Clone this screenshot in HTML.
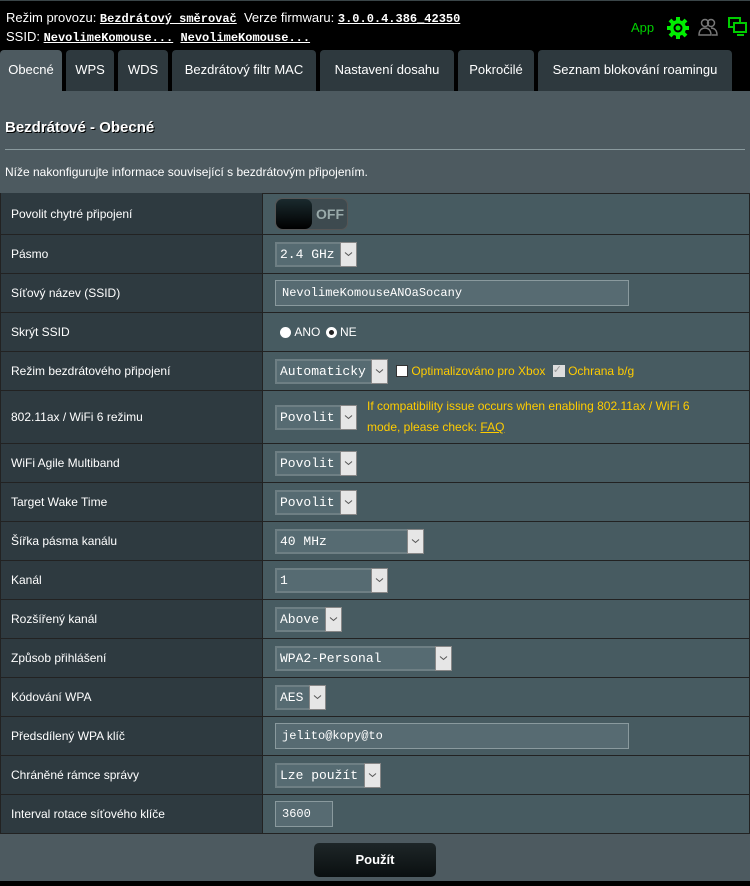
<!DOCTYPE html>
<html><head><meta charset="utf-8"><style>
*{margin:0;padding:0;box-sizing:border-box}
body{width:750px;height:886px;background:#4d5a60;font-family:"Liberation Sans",Arial,sans-serif;position:relative;overflow:hidden;color:#fff}
.hdr{position:absolute;left:0;top:0;width:750px;height:50px;background:#000;border-top:1px solid #3a4548}
.hdr .l{position:absolute;left:6px;font-size:13px;color:#fff}
.hdr b{font-family:"Liberation Mono",monospace;font-size:12px;text-decoration:underline;font-weight:bold}
.tabs{position:absolute;top:50px;left:0;height:41px;width:750px;background:#000}
.tab{position:absolute;top:0;height:41px;background:#2e393e;border-radius:4px 4px 0 0;font-size:13px;color:#fff;text-align:center;line-height:40px}
.tab.a{background:#4d5a60}
h1{position:absolute;left:5px;top:119px;font-size:15px;font-weight:bold;text-shadow:1px 1px 0 #000}
.hr{position:absolute;left:5px;top:149px;width:740px;height:1px;background:#8a9a9e}
.desc{position:absolute;left:5px;top:165px;font-size:12px}
.tbl{position:absolute;left:0;top:193px;width:750px;height:641px;background:#475b61;border:1px solid #222}
.row{position:absolute;left:0;width:748px;border-top:1px solid #222}
.lab{position:absolute;left:0;top:0;bottom:0;width:262px;background:#2e3a40;border-right:1px solid #222;font-size:12px;padding-left:10px;display:flex;align-items:center}
.v{position:absolute;left:274px;top:0;bottom:0;display:flex;align-items:center;font-size:12px}
.sel{height:25px;background:#566b72;border:2px solid #6e7f84;border-right:none;font-family:"Liberation Mono",monospace;font-size:13px;display:flex;align-items:center;padding-left:3px;position:relative}
.sel i{position:absolute;right:0;top:-2px;width:17px;height:25px;background:#e6e6e6;border:1px solid #888;display:flex;align-items:center;justify-content:center}
.inp{height:26px;background:#576b72;border:1px solid #8a9a9e;font-family:"Liberation Mono",monospace;font-size:12px;display:flex;align-items:center;padding-left:6px}
.y{color:#ffcc00}
.btn{position:absolute;left:314px;top:843px;width:122px;height:34px;background:linear-gradient(#1e2628,#0a0f10);border-radius:5px;font-weight:bold;font-size:13px;text-align:center;line-height:33px}
.foot{position:absolute;left:0;top:881px;width:750px;height:5px;background:#000}
</style></head><body>
<svg width="0" height="0" style="position:absolute"><defs><symbol id="ch" viewBox="0 0 9 6"><path d="M1 1.5L4.5 4.5L8 1.5" fill="none" stroke="#555" stroke-width="1"/></symbol></defs></svg>
<div class="hdr">
<div class="l" style="top:9px">Režim provozu: <b>Bezdrátový směrovač</b>&nbsp; Verze firmwaru: <b>3.0.0.4.386_42350</b></div>
<div class="l" style="top:28px">SSID: <b>NevolimeKomouse...</b>&nbsp; <b>NevolimeKomouse...</b></div>
<div style="position:absolute;left:631px;top:19px;color:#00d000;font-size:13px">App</div>
<svg style="position:absolute;left:666px;top:15px" width="24" height="24" viewBox="0 0 24 24"><g fill="#00ee00"><circle cx="12" cy="12" r="8"/><g stroke="#00ee00" stroke-width="4"><line x1="12" y1="1" x2="12" y2="23"/><line x1="1" y1="12" x2="23" y2="12"/><line x1="4" y1="4" x2="20" y2="20"/><line x1="20" y1="4" x2="4" y2="20"/></g></g><circle cx="12" cy="12" r="4.5" fill="#000"/><circle cx="12" cy="12" r="2.5" fill="#00ee00"/></svg>
<svg style="position:absolute;left:698px;top:16px" width="20" height="20" viewBox="0 0 20 20" fill="none" stroke="#777" stroke-width="1.5"><circle cx="7" cy="6" r="3.5"/><circle cx="13" cy="6" r="3.5"/><path d="M1 18c0-5 3-7 6-7s6 2 6 7zM13 11c3 0 6 2 6 7h-5"/></svg>
<svg style="position:absolute;left:728px;top:16px" width="20" height="20" viewBox="0 0 20 20" fill="none" stroke="#00cc00" stroke-width="2"><rect x="1" y="1" width="11" height="9"/><rect x="6" y="6" width="12" height="9" fill="#000"/><line x1="9" y1="18" x2="16" y2="18"/></svg>
</div>
<div class="tabs">
<div class="tab a" style="left:0;width:62px">Obecné</div>
<div class="tab" style="left:66px;width:48px">WPS</div>
<div class="tab" style="left:118px;width:50px">WDS</div>
<div class="tab" style="left:172px;width:144px">Bezdrátový filtr MAC</div>
<div class="tab" style="left:320px;width:134px">Nastavení dosahu</div>
<div class="tab" style="left:458px;width:76px">Pokročilé</div>
<div class="tab" style="left:538px;width:194px">Seznam blokování roamingu</div>
</div>
<h1>Bezdrátové - Obecné</h1>
<div class="hr"></div>
<div class="desc">Níže nakonfigurujte informace související s bezdrátovým připojením.</div>
<div class="tbl">
<div class="row" style="top:-1px;height:41px;border-top:none"><div class="lab">Povolit chytré připojení</div><div class="v"><div style="width:73px;height:32px;background:#3d4a4f;border-radius:7px;position:relative;border:1px solid #555"><div style="position:absolute;left:0;top:0;width:36px;height:30px;border-radius:7px;background:linear-gradient(#1a2a2e,#000)"></div><span style="position:absolute;left:40px;top:7px;font-weight:bold;font-size:14px;color:#9aa">OFF</span></div></div></div>
<div class="row" style="top:40px;height:39px"><div class="lab">Pásmo</div><div class="v"><div class="sel" style="width:82px">2.4 GHz<i><svg width="9" height="6"><use href="#ch"/></svg></i></div></div></div>
<div class="row" style="top:79px;height:39px"><div class="lab">Síťový název (SSID)</div><div class="v"><div class="inp" style="width:354px">NevolimeKomouseANOaSocany</div></div></div>
<div class="row" style="top:118px;height:39px"><div class="lab">Skrýt SSID</div><div class="v">
<span style="display:inline-block;width:11px;height:11px;border-radius:50%;background:#fff;margin-left:5px"></span>&nbsp;ANO&nbsp;
<span style="display:inline-block;width:11px;height:11px;border-radius:50%;border:3px solid #fff;background:#222;margin-left:2px"></span>&nbsp;NE</div></div>
<div class="row" style="top:157px;height:39px"><div class="lab">Režim bezdrátového připojení</div><div class="v"><div class="sel" style="width:113px">Automaticky<i><svg width="9" height="6"><use href="#ch"/></svg></i></div>
<span style="display:inline-block;width:12px;height:12px;background:#fff;border:1px solid #333;margin-left:8px"></span><span class="y">&nbsp;Optimalizováno pro Xbox&nbsp;</span>
<span style="display:inline-block;width:12px;height:12px;background:#ddd;color:#999;font-size:11px;line-height:11px;margin-left:4px">✓</span><span class="y">&nbsp;Ochrana b/g</span></div></div>
<div class="row" style="top:196px;height:53px"><div class="lab">802.11ax / WiFi 6 režimu</div><div class="v"><div class="sel" style="width:82px">Povolit<i><svg width="9" height="6"><use href="#ch"/></svg></i></div><div class="y" style="margin-left:10px;line-height:21px;width:350px">If compatibility issue occurs when enabling 802.11ax / WiFi 6 mode, please check: <u>FAQ</u></div></div></div>
<div class="row" style="top:249px;height:39px"><div class="lab">WiFi Agile Multiband</div><div class="v"><div class="sel" style="width:82px">Povolit<i><svg width="9" height="6"><use href="#ch"/></svg></i></div></div></div>
<div class="row" style="top:288px;height:39px"><div class="lab">Target Wake Time</div><div class="v"><div class="sel" style="width:82px">Povolit<i><svg width="9" height="6"><use href="#ch"/></svg></i></div></div></div>
<div class="row" style="top:327px;height:39px"><div class="lab">Šířka pásma kanálu</div><div class="v"><div class="sel" style="width:149px">40 MHz<i><svg width="9" height="6"><use href="#ch"/></svg></i></div></div></div>
<div class="row" style="top:366px;height:39px"><div class="lab">Kanál</div><div class="v"><div class="sel" style="width:113px">1<i><svg width="9" height="6"><use href="#ch"/></svg></i></div></div></div>
<div class="row" style="top:405px;height:39px"><div class="lab">Rozšířený kanál</div><div class="v"><div class="sel" style="width:67px">Above<i><svg width="9" height="6"><use href="#ch"/></svg></i></div></div></div>
<div class="row" style="top:444px;height:39px"><div class="lab">Způsob přihlášení</div><div class="v"><div class="sel" style="width:177px">WPA2-Personal<i><svg width="9" height="6"><use href="#ch"/></svg></i></div></div></div>
<div class="row" style="top:483px;height:39px"><div class="lab">Kódování WPA</div><div class="v"><div class="sel" style="width:51px">AES<i><svg width="9" height="6"><use href="#ch"/></svg></i></div></div></div>
<div class="row" style="top:522px;height:39px"><div class="lab">Předsdílený WPA klíč</div><div class="v"><div class="inp" style="width:354px">jelito@kopy@to</div></div></div>
<div class="row" style="top:561px;height:39px"><div class="lab">Chráněné rámce správy</div><div class="v"><div class="sel" style="width:106px">Lze použít<i><svg width="9" height="6"><use href="#ch"/></svg></i></div></div></div>
<div class="row" style="top:600px;height:39px"><div class="lab">Interval rotace síťového klíče</div><div class="v"><div class="inp" style="width:58px">3600</div></div></div>
</div>
<div class="btn">Použít</div>
<div class="foot"></div>
</body></html>
